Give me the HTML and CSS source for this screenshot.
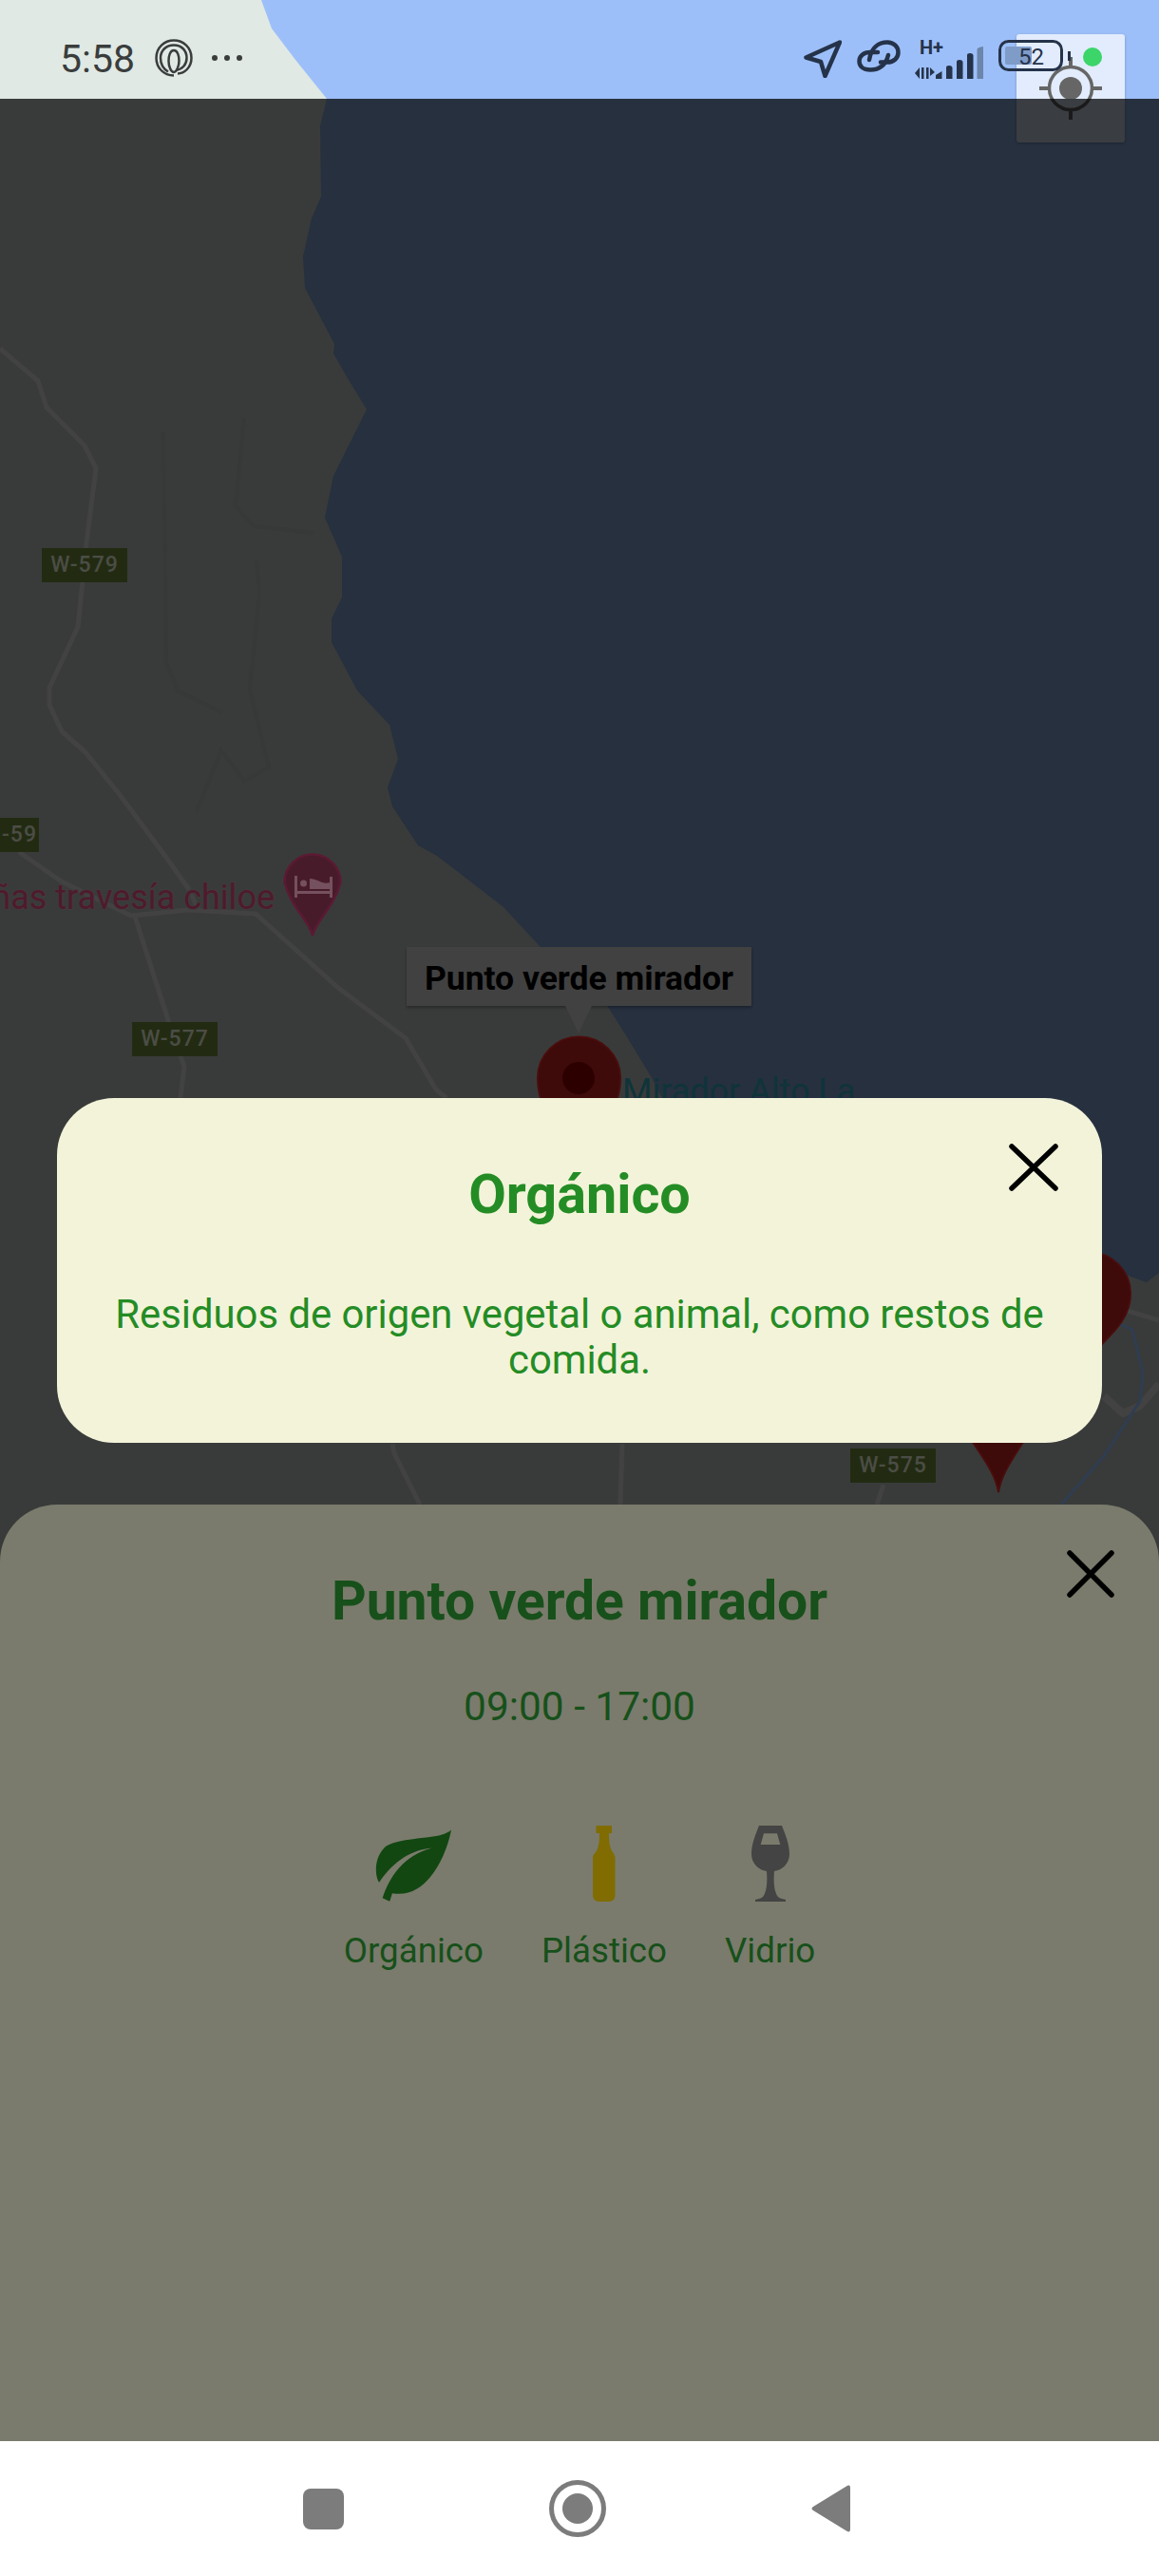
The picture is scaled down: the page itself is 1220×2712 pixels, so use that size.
FILE: index.html
```html
<!DOCTYPE html>
<html lang="es">
<head>
<meta charset="utf-8">
<title>Punto verde mirador</title>
<link rel="stylesheet" href="styles.css">
</head>
<body>
<div class="phone">
  <header class="status">
    <svg class="status-map" viewBox="0 0 1220 104"><polygon class="sky" points="275,0 286,30 311,63 344,104 1220,104 1220,0"/></svg>
    <div class="status-left">
      <span class="time">5:58</span>
      <svg class="ic-print" viewBox="0 0 40 40"><path d="M20 38.500C9 38.500 1.500 30 1.500 20C1.500 9 10 1.500 20 1.500C30 1.500 38.500 9 38.500 20C38.500 30 31 36.500 24 36.500"/><path d="M14 34.500C8 31 6 25 6 20C6 12 12 6.500 20 6.500C28 6.500 33.500 12 33.500 20C33.500 27 29 32 22 33"/><path d="M20 12C16 12 14.500 18 14.500 23C14.500 29 17 35 20 35C23 35 25.500 28 25.500 23C25.500 18 24 12 20 12Z"/></svg>
      <svg class="ic-dots" viewBox="0 0 32 8"><circle cx="3" cy="4" r="3"/><circle cx="16" cy="4" r="3"/><circle cx="29" cy="4" r="3"/></svg>
    </div>
    <div class="status-right">
      <svg class="ic-arrow" viewBox="0 0 40 40"><path d="M38 2.500L2.500 18.500L18 23L22.500 38Z"/></svg>
      <svg class="ic-link" viewBox="0 0 46 34"><path d="M13 21C15 8 23 2.500 32 2.500C39 2.500 43.500 7.500 43.500 13C43.500 19 39 23.500 32 23.500H25"/><path d="M22 13H14C7 13 2.500 17 2.500 22.500C2.500 28 7 31.500 14 31.500C22 31.500 30 28 33 16"/></svg>
      <svg class="ic-signal" viewBox="0 0 73 34">
        <text class="net" x="5" y="7.500">H+</text>
        <path class="bar" d="M0 28L5 22V34ZM7 22H9.500V34H7ZM12 22H14.500V34H12ZM16 22L21 27L16 31Z"/>
        <path class="bar" d="M22 34V30L28.500 26V34ZM33 34V22Q33 20 36 20T39.500 22V34ZM44 34V16Q44 14 47 14T50.500 16V34ZM55 34V9Q55 7 58 7T61.500 9V34Z"/>
        <path class="bar-off" d="M65.500 34V3Q65.500 1 72 0V34Z"/>
      </svg>
      <svg class="ic-batt" viewBox="0 0 78 34">
        <rect class="batt-level" x="7" y="7" width="28" height="19" rx="2"/>
        <rect class="batt-case" x="1.500" y="1.500" width="65" height="30" rx="9"/>
        <text class="batt-num" x="21" y="26">52</text>
        <path class="batt-tip" d="M73 12H76V22H73Z"/>
      </svg>
      <span class="dot"></span>
    </div>
  </header>

  <main class="stage">
    <svg class="map" viewBox="0 104 1220 2466">
      <polygon class="water" points="344,104 337,133 338,207 328,230 319,270 321,303 352,362 351,372 367,400 386,431 351,501 342,545 360,586 360,629 349,651 349,676 376,727 410,763 419,799 408,829 413,849 440,890 460,901 530,955 568,996 640,1060 659,1090 685,1133 720,1200 1160,1333 1207,1350 1220,1340 1220,104"/>
      <path class="faint" d="M172 454L175 697L187 727L233 750M257 440L248 533L267 554L330 561M270 590L273 626L263 726L283 808L257 822L233 790L207 854"/>
      <path class="road" d="M0 367L40 401L49 429L89 469L101 493L91 572L82 660L52 724L52 742L65 770L90 792L127 838L173 900L198 935L210 960"/>
      <path class="road" d="M20 897L63 927L83 937L138 964L198 958L269 962L356 1040L427 1093L459 1147L470 1156"/>
      <path class="road" d="M142 965L178 1077L194 1123L190 1156"/>
      <path class="road" d="M413 1520L415 1530L442 1584M930 1563L923 1584M655 1520L653 1584"/>
      <path class="road road-wide" d="M1162 1470L1182 1488L1200 1480L1220 1457"/>
      <path class="road" d="M1187 1380L1220 1390"/>
      <path class="river" d="M1177 1393L1192 1400L1203 1445L1200 1475L1162 1533L1117 1584"/>
      <g>
        <path class="hotel-pin" d="M329 985C326 970 306 955 299.500 929A29.500 29.500 0 0 1 358.500 929C352 955 332 970 329 985Z"/>
        <path class="hotel-bed" d="M310 922H313V938H347V923H350V945H347V941H313V945H310ZM326 925C334 925 340 932 347 929V936H326Z"/>
        <circle class="hotel-bed" cx="319.500" cy="930" r="3.500"/>
      </g>
      <g class="red-pin">
        <path d="M609 1240C604 1200 566 1180 566 1135A43.500 43.500 0 0 1 653 1135C653 1180 614 1200 609 1240Z"/>
        <circle class="red-core" cx="609" cy="1135" r="17"/>
      </g>
      <g class="red-pin">
        <path d="M1140 1470C1135 1440 1103 1410 1103 1362A43.500 43.500 0 0 1 1190 1362C1190 1385 1175 1400 1160 1415C1150 1430 1143 1450 1140 1470Z"/>
      </g>
      <g class="red-pin">
        <path d="M1051 1571C1047 1540 1010 1510 1000 1470L1100 1470C1090 1510 1055 1540 1051 1571Z"/>
      </g>
      <text class="poi-hotel" x="289" y="957" text-anchor="end">ñas travesía chiloe</text>
      <text class="poi-view" x="655" y="1161">Mirador Alto La</text>
    </svg>

    <span class="shield s579">W-579</span>
    <span class="shield s59">-59</span>
    <span class="shield s577">W-577</span>
    <span class="shield s575">W-575</span>

    <div class="bubble">Punto verde mirador</div>

    <section class="dialog">
      <svg class="close close-dialog" viewBox="0 0 52 50"><path d="M3 3L49 47M49 3L3 47"/></svg>
      <h2 class="dialog-title">Orgánico</h2>
      <p class="dialog-text">Residuos de origen vegetal o animal, como restos de comida.</p>
    </section>

    <section class="sheet">
      <svg class="close close-sheet" viewBox="0 0 50 50"><path d="M3 3L47 47M47 3L3 47"/></svg>
      <h1 class="sheet-title">Punto verde mirador</h1>
      <p class="hours">09:00 - 17:00</p>
      <ul class="kinds">
        <li class="kind">
          <svg class="ic-leaf" viewBox="0 0 80 76"><path d="M7.600 72.300C15 50 30 27 59.300 19.700C40 21 20 32 4.100 55.700C0 50 -2 32 9 20C16 12 35 11 64 7C72 5.500 77 3 80 .7C76 20 68 38 58 50C48 62 36 70 17.900 67.300L15.200 75.700Z"/></svg>
          <span>Orgánico</span>
        </li>
        <li class="kind">
          <svg class="ic-bottle" viewBox="0 0 24 80"><path d="M3.500 0H20V8H17C17 18 18 24 21 28C23 31 23.500 32 23.500 35V73Q23.500 80 17 80H7Q0 80 0 73V35C0 32 .5 31 3 28C6 24 7 18 7 8H3.500Z"/></svg>
          <span>Plástico</span>
        </li>
        <li class="kind">
          <svg class="ic-glass" viewBox="0 0 40 80"><path fill-rule="evenodd" d="M8 0H32C36 10 40 20 40 30C40 40 32 47 24 48C23 60 24 70 28 75C30 77 34 77 36 78V80H4V78C6 77 10 77 12 75C16 70 17 60 16 48C8 47 0 40 0 30C0 20 4 10 8 0ZM13 8.300H27L30.300 20H9.700Z"/></svg>
          <span>Vidrio</span>
        </li>
      </ul>
    </section>
  </main>

  <nav class="navbar">
    <span class="nav-square"></span>
    <span class="nav-home"><span class="nav-home-dot"></span></span>
    <svg class="nav-back" viewBox="0 0 41 50"><path d="M37 1.500Q41 -1 41 3V47Q41 51 37 48.500L2 27Q-1 25 2 23Z"/></svg>
  </nav>

  <div class="locate">
    <svg class="ic-target" viewBox="0 0 66 66">
      <defs>
        <clipPath id="clip-up"><rect x="0" y="0" width="66" height="44"/></clipPath>
        <clipPath id="clip-down"><rect x="0" y="44" width="66" height="22"/></clipPath>
      </defs>
      <g class="target target-up" clip-path="url(#clip-up)">
        <circle class="t-ring" cx="33" cy="33" r="22.500"/><circle class="t-dot" cx="33" cy="33" r="12"/><path class="t-tick" d="M33 0V9M33 57V66M0 33H9M57 33H66"/>
      </g>
      <g class="target target-down" clip-path="url(#clip-down)">
        <circle class="t-ring" cx="33" cy="33" r="22.500"/><path class="t-tick" d="M33 57V66"/>
      </g>
    </svg>
  </div>
</div>
</body>
</html>
```
FILE: styles.css
```css
* { box-sizing: border-box; }
html, body { margin: 0; padding: 0; }
body { font-family: Roboto, "Liberation Sans", sans-serif; background: #fff; }

.phone {
  position: relative;
  width: 1220px;
  height: 2712px;
  display: flex;
  flex-direction: column;
  overflow: hidden;
}

/* status bar */
.status {
  position: relative;
  flex: 0 0 104px;
  display: flex;
  justify-content: space-between;
  align-items: flex-start;
  background: #e0e9e4;
  padding: 40px 60px 0 63px;
}
.status-map { position: absolute; left: 0; top: 0; width: 1220px; height: 104px; }
.sky { fill: #9dbff9; }
.status-left, .status-right { position: relative; display: flex; z-index: 2; }
.status-left { align-items: center; }
.time { font-size: 41px; line-height: 41px; color: #3a3d3c; position: relative; top: 2px; }
.ic-print { width: 40px; height: 40px; margin-left: 21px; fill: none; stroke: #3a3d3c; stroke-width: 2.500; }
.ic-dots { width: 32px; height: 8px; margin-left: 20px; fill: #3a3d3c; }

.status-right { align-items: flex-start; }
.ic-arrow { width: 40px; height: 40px; margin-top: 2px; fill: none; stroke: #25334a; stroke-width: 4.500; stroke-linejoin: round; }
.ic-link { width: 46px; height: 34px; margin: 2px 0 0 16px; fill: none; stroke: #25334a; stroke-width: 4.500; stroke-linecap: round; }
.ic-signal { width: 73px; height: 34px; margin: 9px 0 0 15px; overflow: visible; }
.net { font-size: 20px; font-weight: 700; fill: #25334a; }
.bar { fill: #25334a; }
.bar-off { fill: #6b85ab; }
.ic-batt { width: 78px; height: 34px; margin: 2px 0 0 15px; overflow: visible; }
.batt-case { fill: none; stroke: #25334a; stroke-width: 3; }
.batt-level { fill: #7f9cc9; }
.batt-num { font-size: 24px; fill: #25334a; }
.batt-tip { fill: #25334a; }
.dot { width: 20px; height: 20px; border-radius: 50%; background: #3bd56a; margin: 10px 0 0 11px; }

/* map + stage */
.stage {
  position: relative;
  flex: 1;
  display: flex;
  flex-direction: column;
  padding-top: 1052px;
  background: #393b3a;
}
.map { position: absolute; left: 0; top: 0; width: 1220px; height: 2466px; }
.water { fill: #26303f; }
.road { fill: none; stroke: #424242; stroke-width: 5; stroke-linejoin: round; }
.road-wide { stroke-width: 8; }
.faint { fill: none; stroke: #373938; stroke-width: 4; }
.river { fill: none; stroke: #2f3d52; stroke-width: 3; }
.hotel-pin { fill: #481b2a; stroke: #5b1a33; stroke-width: 2.500; }
.hotel-bed { fill: #75505e; }
.red-pin { fill: #3e0a0a; stroke: #4a0d0d; stroke-width: 2; }
.red-core { fill: #2d0000; stroke: none; }
.poi-hotel { font-size: 36px; fill: #4f1a2d; stroke: #403c3c; stroke-width: 2px; paint-order: stroke; }
.poi-view { font-size: 36px; fill: #0f343a; }

.shield {
  position: absolute;
  height: 36px;
  width: 90px;
  background: #222b12;
  color: #4b4d45;
  font-size: 23px;
  font-weight: 500;
  line-height: 36px;
  text-align: center;
  letter-spacing: 1px;
}
.s579 { left: 44px; top: 473px; }
.s59 { left: 0; top: 757px; width: 41px; height: 36px; }
.s577 { left: 139px; top: 972px; }
.s575 { left: 895px; top: 1421px; }

.bubble {
  position: absolute;
  left: 428px;
  top: 893px;
  width: 363px;
  height: 62px;
  background: #414141;
  color: #000;
  font-size: 35.500px;
  font-weight: 700;
  line-height: 66px;
  text-align: center;
  white-space: nowrap;
  box-shadow: 0 2px 3px rgba(0, 0, 0, .3);
}
.bubble::after {
  content: "";
  position: absolute;
  left: 167px;
  top: 62px;
  border-left: 14.500px solid transparent;
  border-right: 14.500px solid transparent;
  border-top: 29px solid #414141;
}

/* dialog */
.dialog {
  position: relative;
  flex: 0 0 363px;
  margin: 0 60px;
  padding: 68px 30px 0;
  border-radius: 60px;
  background: #f3f3da;
  color: #248c24;
  text-align: center;
}
.dialog-title { margin: 0; font-size: 57.500px; line-height: 68px; font-weight: 700; }
.dialog-text { margin: 68px 0 0; font-size: 41.800px; line-height: 48px; }
.close { position: absolute; fill: none; stroke: #000; stroke-width: 5.500; stroke-linecap: round; }
.close-dialog { left: 1002px; top: 48px; width: 52px; height: 50px; }

/* sheet */
.sheet {
  position: relative;
  flex: 1;
  margin-top: 65px;
  border-radius: 60px 60px 0 0;
  background: #7a7b6c;
  color: #17501a;
  text-align: center;
  padding-top: 72px;
}
.close-sheet { left: 1123px; top: 48px; width: 50px; height: 50px; }
.sheet-title { margin: 0; font-size: 57px; line-height: 60px; font-weight: 700; }
.hours { margin: 57px 0 0; font-size: 42.400px; line-height: 48px; }
.kinds {
  list-style: none;
  margin: 101px 0 0;
  padding: 0;
  display: flex;
  justify-content: center;
  align-items: flex-end;
  gap: 61px;
}
.kind { display: flex; flex-direction: column; align-items: center; font-size: 36.700px; line-height: 44px; gap: 30px; }
.ic-leaf { width: 80px; height: 76px; fill: #124711; margin-top: 4px; }
.ic-bottle { width: 24px; height: 80px; fill: #806c00; }
.ic-glass { width: 40px; height: 80px; fill: #444; }

/* nav */
.navbar {
  flex: 0 0 142px;
  background: #fff;
  display: flex;
  justify-content: center;
  align-items: center;
  gap: 216px;
  padding: 0 7px 0 0;
}
.nav-square { width: 43px; height: 43px; border-radius: 8px; background: #7c7c7c; }
.nav-home {
  width: 60px;
  height: 60px;
  border-radius: 50%;
  border: 5px solid #7c7c7c;
  display: flex;
  align-items: center;
  justify-content: center;
}
.nav-home-dot { width: 32px; height: 32px; border-radius: 50%; background: #7c7c7c; }
.nav-back { width: 41px; height: 50px; fill: #7c7c7c; }

/* floating locate button */
.locate {
  position: absolute;
  z-index: 1;
  left: 1070px;
  top: 36px;
  width: 114px;
  height: 114px;
  border-radius: 3px;
  background: linear-gradient(to bottom, rgba(255, 255, 255, .7) 68px, #3a3d42 68px);
  box-shadow: 0 1px 3px rgba(0, 0, 0, .25);
  display: flex;
  align-items: center;
  justify-content: center;
}
.ic-target { width: 66px; height: 66px; }
.t-ring { fill: none; stroke-width: 3.500; }
.t-tick { fill: none; stroke-width: 4; }
.target-up .t-ring, .target-up .t-tick { stroke: #666; }
.target-up .t-dot { fill: #666; }
.target-down .t-ring, .target-down .t-tick { stroke: #1a1a1a; }
```
